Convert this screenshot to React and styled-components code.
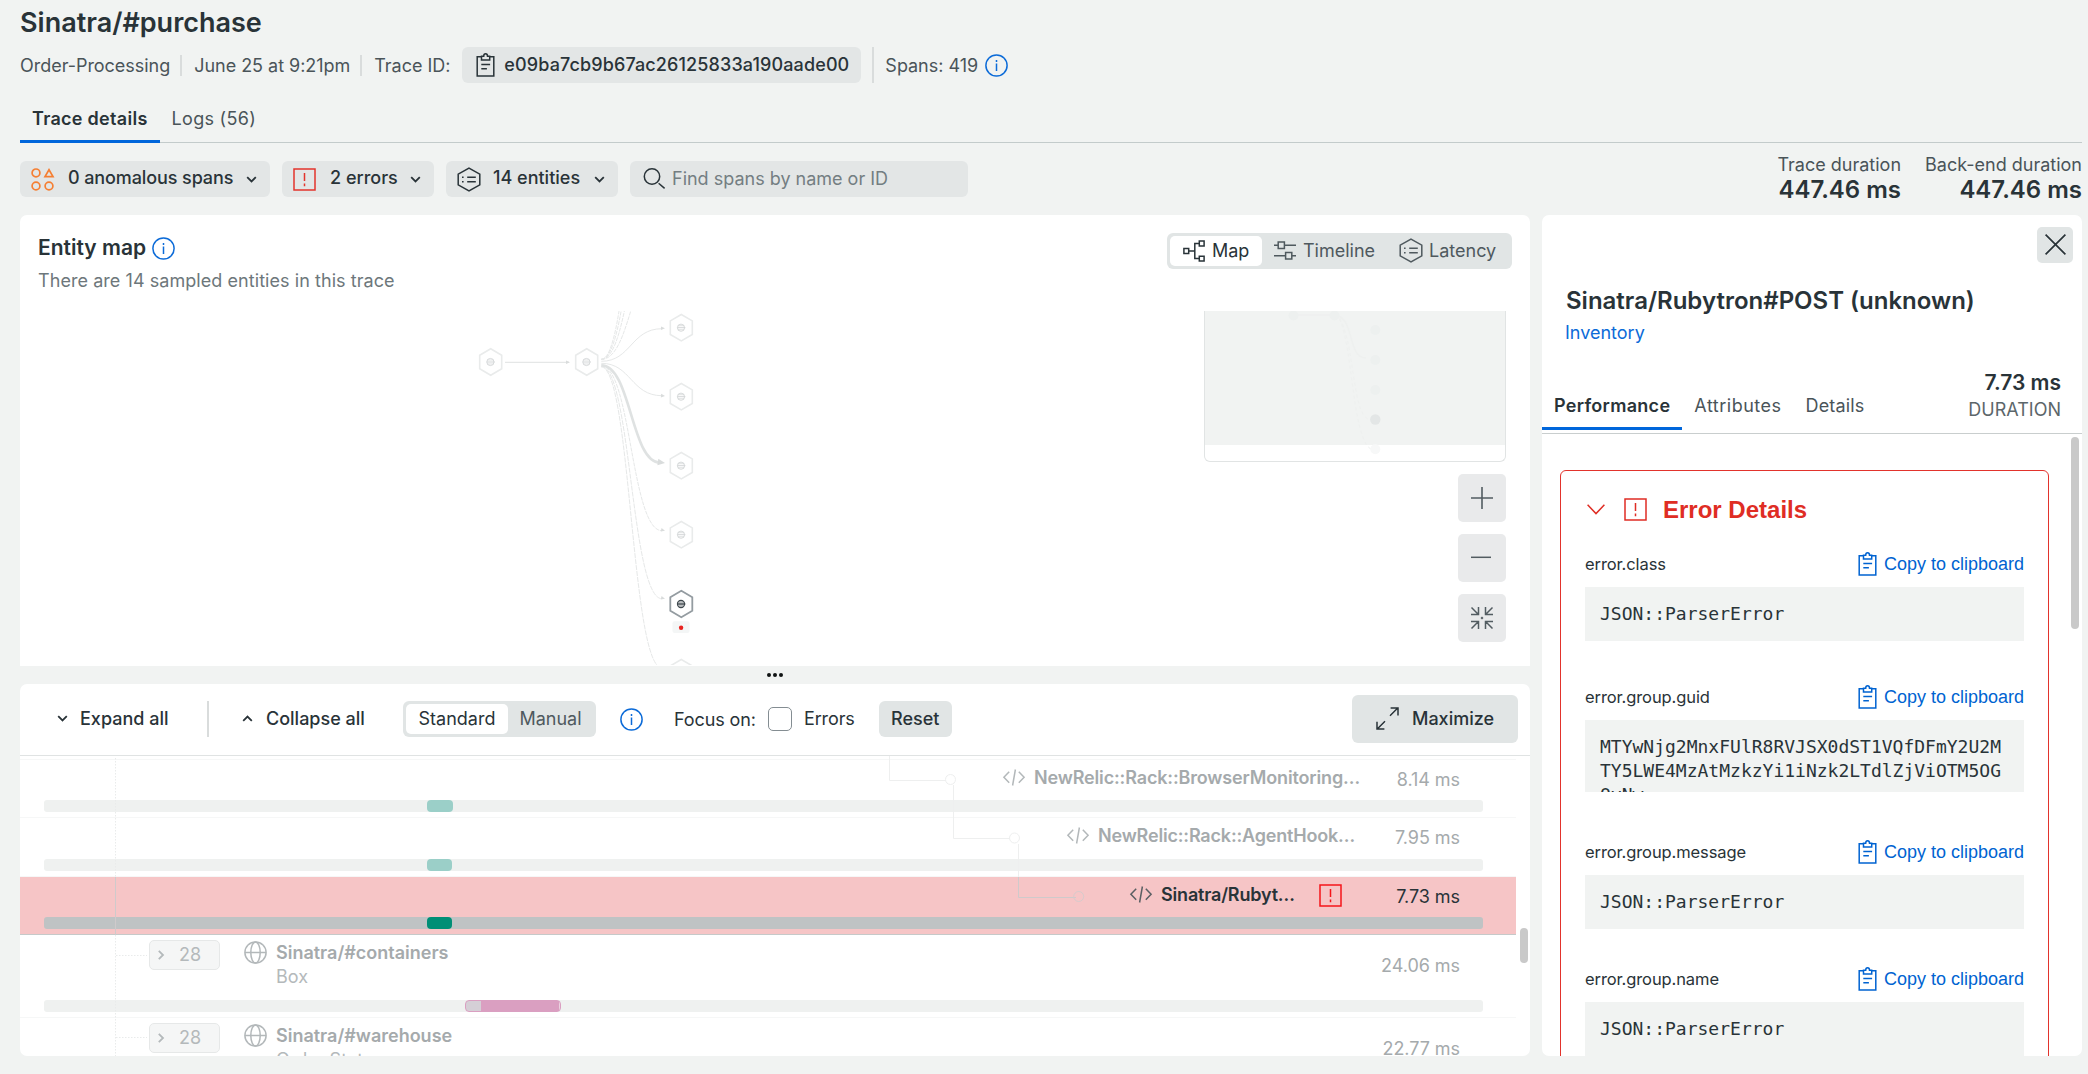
import React from "react";
import styled, { createGlobalStyle, css } from "styled-components";

const Global = createGlobalStyle`
  * { box-sizing: border-box; }
  body {
    margin: 0;
    background: #f1f3f2;
    color: #293338;
    font-family: Inter, "Noto Sans", sans-serif;
    font-size: 18px;
    line-height: 24px;
  }
  svg { display: block; flex: none; overflow: visible; }
`;

const Page = styled.div`
  height: 1074px;
  overflow: hidden;
  padding: 7px 6px 0 20px;
`;

/* ---------- icons ---------- */

const Stroke = styled.svg.attrs({ fill: "none", stroke: "currentColor" })`
  stroke-width: ${(p) => p.$w || 1.5};
`;

const ClipboardIcon = () => (
  <Stroke width="19" height="24" viewBox="0 0 19 24">
    <path d="M5.5 3.8H1.2v19.2h16.6V3.8h-4.3" />
    <path d="M5.5 3.2h2.2c0-3.2 3.8-3.2 3.8 0h2.2v3.9H5.5z" />
    <path d="M5.3 11.5h8.8M5.3 15.8h5.6" />
  </Stroke>
);

const InfoIcon = () => (
  <Stroke width="23" height="23" viewBox="0 0 23 23">
    <circle cx="11.5" cy="11.5" r="10.6" />
    <path d="M11.5 9.4v7.6M11.5 6v1.9" />
  </Stroke>
);

const AnomalyIcon = () => (
  <Stroke width="23" height="23" viewBox="0 0 23 23" $w={1.7}>
    <circle cx="5" cy="4.9" r="3.9" />
    <path d="M18 1.7L22 8.6H14z" />
    <circle cx="5" cy="18" r="3.9" />
    <circle cx="18" cy="18" r="3.9" />
  </Stroke>
);

const ErrorIcon = () => (
  <Stroke width="23" height="23" viewBox="0 0 23 23">
    <path d="M1 1h21v21H1zM11.5 5v8M11.5 15.5v2.7" />
  </Stroke>
);

const EntityIcon = () => (
  <Stroke width="24" height="25" viewBox="0 0 24 25">
    <path d="M12 1.2l10.8 5.9v10.8L12 23.8 1.2 17.9V7.1z" />
    <path d="M10.2 10.3h8.6M10.2 14.7h8.6M5 10.3h1.6M5 14.7h1.6" />
  </Stroke>
);

const SearchIcon = () => (
  <Stroke width="23" height="21" viewBox="0 0 23 21">
    <circle cx="9" cy="8.5" r="7.7" />
    <path d="M15.6 15.2l6 5.2" />
  </Stroke>
);

const MapIcon = () => (
  <Stroke width="22" height="22" viewBox="0 0 22 22">
    <path d="M.9 8.6h4.8v4.8H.9zM16.3 1.1h4.8v4.8h-4.8zM16.3 16.2h4.8V21h-4.8zM5.7 11h6M16.3 3.4h-4.5v15.2h4.5" />
  </Stroke>
);

const TimelineIcon = () => (
  <Stroke width="22" height="19" viewBox="0 0 22 19">
    <path d="M0 4.2h4.2M10.4 4.2H22M4.2 1h6.2v6.4H4.2zM0 14.8h11.6M17.8 14.8H22M11.6 11.6h6.2V18h-6.2z" />
  </Stroke>
);

const PlusIcon = () => (
  <Stroke width="22" height="22" viewBox="0 0 22 22" $w={1.6}>
    <path d="M11 0v22M0 11h22" />
  </Stroke>
);

const MinusIcon = () => (
  <Stroke width="22" height="22" viewBox="0 0 22 22">
    <path d="M0 10.3h20" />
  </Stroke>
);

const CenterIcon = () => (
  <Stroke width="22" height="22" viewBox="0 0 22 22">
    <path d="M.5.5l6.7 6.7M7.5 0v7.5H0M21.5.5l-6.7 6.7M14.5 0v7.5H22M.5 21.5l6.7-6.7M7.5 22v-7.5H0M21.5 21.5l-6.7-6.7M14.5 22v-7.5H22" />
    <path d="M11 9.5l1.5 1.5-1.5 1.5L9.5 11z" fill="currentColor" stroke="none" />
  </Stroke>
);

const ExpandIcon = () => (
  <Stroke width="23" height="23" viewBox="0 0 23 23">
    <path d="M14 8.8L21.5 1.3M14.6 1h7.4v7.4M9 14.2l-7.5 7.5M1 14.8V22h7.4" />
  </Stroke>
);

const CloseIcon = () => (
  <Stroke width="21" height="21" viewBox="0 0 21 21" $w={1.7}>
    <path d="M.6.6l19.8 19.8M20.4.6L.6 20.4" />
  </Stroke>
);

const CodeIcon = () => (
  <Stroke width="22" height="17" viewBox="0 0 22 17">
    <path d="M6.2 2.8L.9 8.3l5.3 5.5M15.8 2.8l5.3 5.5-5.3 5.5M12.4.5L9.6 16.5" />
  </Stroke>
);

const GlobeIcon = () => (
  <Stroke width="23" height="23" viewBox="0 0 23 23">
    <circle cx="11.5" cy="11.5" r="10.6" />
    <ellipse cx="11.5" cy="11.5" rx="4.7" ry="10.6" />
    <path d="M.9 11.5h21.2" />
  </Stroke>
);

const Chevron = ({ dir = "down" }) => (
  <Stroke width="11" height="7" viewBox="0 0 11 7" $w={1.8}>
    {dir === "down" ? <path d="M1.2 1.2l4.3 4.3 4.3-4.3" /> : <path d="M1.2 5.8l4.3-4.3 4.3 4.3" />}
  </Stroke>
);

/* ---------- header ---------- */

const Title = styled.h1`
  margin: 0;
  font-size: 27px;
  font-weight: 600;
  line-height: 32px;
`;

const Meta = styled.div`
  display: flex;
  align-items: center;
  height: 36px;
  margin-top: 8px;
  color: #4a5459;
`;

const MetaText = styled.span`
  padding-top: 1px;
  letter-spacing: -0.03px;
`;

const Divider = styled.i`
  width: 2px;
  height: ${(p) => p.$h || 21}px;
  background: #d9dcdc;
  margin: 0 ${(p) => p.$r ?? 12}px 0 ${(p) => p.$l ?? 11}px;
`;

const TraceId = styled.button`
  display: flex;
  align-items: center;
  gap: 9px;
  height: 36px;
  width: 399px;
  margin-left: 12px;
  padding: 0 0 0 14px;
  border: 0;
  border-radius: 6px;
  background: #e3e6e6;
  color: #293338;
  font: 550 18px/24px Inter, sans-serif;
  letter-spacing: 0.12px;
`;

const Blue = styled.span`
  color: #0c6bd8;
  margin-left: ${(p) => p.$ml || 0}px;
`;

const Tabs = styled.nav`
  display: flex;
  height: 46px;
  margin-top: 14px;
  background: linear-gradient(#c3cbcb, #c3cbcb) 0 45px / 100% 1px no-repeat;
`;

const Tab = styled.span`
  height: 46px;
  line-height: 43px;
  padding: 0 12px;
  letter-spacing: ${(p) => p.$ls || 0.29}px;
  color: #4a5459;
  border-bottom: 3px solid transparent;
  ${(p) =>
    p.$active &&
    css`
      font-weight: 600;
      color: #293338;
      border-color: #0066db;
    `}
`;

const Filters = styled.div`
  display: flex;
  gap: 12px;
  height: 36px;
  margin-top: 18px;
`;

const FilterButton = styled.button`
  display: flex;
  align-items: center;
  width: ${(p) => p.$width}px;
  height: 36px;
  padding: 0 13px 0 11px;
  border: 0;
  border-radius: 6px;
  background: #e3e6e6;
  color: #293338;
  font: 550 18px/24px Inter, sans-serif;
`;

const FilterLabel = styled.span`
  flex: 1;
  text-align: left;
  padding-bottom: 2px;
  margin-left: ${(p) => p.$ml || 14}px;
  letter-spacing: ${(p) => p.$ls || 0}px;
`;

const FilterIcon = styled.span`
  color: ${(p) => p.$color};
`;

const Search = styled.div`
  display: flex;
  align-items: center;
  gap: 6px;
  width: 338px;
  height: 36px;
  padding: 0 13px 1px;
  border-radius: 6px;
  background: #e3e6e6;
  span { color: #747e82; }
`;

const Durations = styled.div`
  display: flex;
  gap: 24px;
  margin: -8px 0 0 auto;
  text-align: right;
  color: #4a5459;
  height: 50px;
  strong {
    display: block;
    color: #293338;
    font-size: 24px;
    line-height: 25px;
    font-weight: 600;
  }
`;

/* ---------- body ---------- */

const Main = styled.main`
  display: grid;
  grid-template-columns: 1510px 540px;
  gap: 12px;
  height: 841px;
  margin-top: 18px;
`;

const Left = styled.div`
  display: flex;
  flex-direction: column;
  min-width: 0;
`;

const MapPanel = styled.section`
  height: 451px;
  background: #fff;
  border-radius: 7px 7px 0 0;
`;

const MapHeader = styled.div`
  display: flex;
  justify-content: space-between;
  height: 96px;
  padding: 18px 18px 0 18px;
`;

const MapTitle = styled.div`
  display: flex;
  align-items: center;
  gap: 6px;
  height: 30px;
  font-size: 21px;
  font-weight: 600;
`;

const Subtitle = styled.div`
  margin-top: 6px;
  color: #6d777b;
  letter-spacing: 0.06px;
`;

const Segmented = styled.div`
  display: flex;
  height: 36px;
  width: ${(p) => p.$width}px;
  padding: 3px;
  border-radius: 6px;
  background: #e1e5e5;
`;

const Segment = styled.span`
  display: flex;
  align-items: center;
  justify-content: ${(p) => (p.$pl ? "flex-start" : "center")};
  gap: ${(p) => p.$gap || 8}px;
  width: ${(p) => p.$width}px;
  padding-left: ${(p) => p.$pl || 0}px;
  padding-bottom: 1px;
  border-radius: 5px;
  color: #4f595e;
  ${(p) => p.$active && "background: #fff; color: #293338;"}
`;

const Canvas = styled.div`
  position: relative;
  height: 354px;
  overflow: hidden;
`;

const Overlay = styled.div`
  position: absolute;
  top: 0;
  right: 24px;
  display: flex;
  flex-direction: column;
  align-items: flex-end;
  gap: 12px;
`;

const MiniMap = styled.div`
  width: 302px;
  height: 151px;
  border: 1px solid #e1e4e4;
  border-top: 0;
  border-radius: 0 0 6px 6px;
  background: linear-gradient(#f1f3f2, #f1f3f2) 0 0 / 100% 134px no-repeat #fff;
`;

const ZoomControls = styled.div`
  display: flex;
  flex-direction: column;
  gap: 12px;
`;

const ZoomButton = styled.button`
  display: flex;
  align-items: center;
  justify-content: center;
  width: 48px;
  height: 48px;
  border: 0;
  border-radius: 5px;
  background: #e9eaeb;
  color: #525c61;
`;

const Splitter = styled.div`
  display: flex;
  align-items: center;
  justify-content: center;
  gap: 2px;
  height: 18px;
  i { width: 4px; height: 4px; border-radius: 2px; background: #101314; }
`;

const SpanPanel = styled.section`
  display: flex;
  flex-direction: column;
  height: 372px;
  overflow: hidden;
  background: #fff;
  border-radius: 7px;
`;

const Toolbar = styled.div`
  display: flex;
  align-items: center;
  flex: none;
  height: 72px;
  padding-bottom: 1px;
  border-bottom: 1px solid #e0e3e3;
`;

const ToolButton = styled.span`
  display: flex;
  align-items: center;
  gap: ${(p) => p.$gap || 12}px;
  width: ${(p) => p.$width}px;
  padding: 0 0 1px ${(p) => p.$pl}px;
  font-weight: 550;
`;

const FocusLabel = styled.span`
  margin-left: ${(p) => p.$ml}px;
  padding-top: ${(p) => p.$pt || 0}px;
  letter-spacing: -0.1px;
`;

const Checkbox = styled.i`
  width: 24px;
  height: 24px;
  margin-left: 12px;
  border: 1.5px solid #848d92;
  border-radius: 5px;
`;

const SolidButton = styled.button`
  display: flex;
  align-items: center;
  justify-content: center;
  gap: 13px;
  width: ${(p) => p.$width}px;
  height: ${(p) => p.$height}px;
  margin-left: ${(p) => p.$ml};
  margin-right: ${(p) => p.$mr || 0}px;
  padding: 0 0 1px;
  border: 0;
  border-radius: 6px;
  background: #e1e5e5;
  color: #293338;
  font: 550 18px/24px Inter, sans-serif;
`;

const List = styled.div`
  position: relative;
  height: 300px;
  overflow: hidden;
`;

const PreviousRow = styled.div`
  width: 1496px;
  height: 4px;
  border-bottom: 1px solid #f6f7f7;
`;

const Row = styled.div`
  display: flex;
  flex-direction: column;
  width: 1496px;
  height: ${(p) => p.$height}px;
  padding: 6px 33px 5px 24px;
  border-bottom: 1px solid ${(p) => (p.$error ? "#c6c9c9" : "#f6f7f7")};
  background: ${(p) => (p.$error ? "#f6c5c6" : "transparent")};
  color: ${(p) => (p.$error ? "#293338" : "#a5aaac")};
`;

const RowContent = styled.div`
  display: flex;
  align-items: flex-start;
  flex: 1;
  min-height: 0;
  padding-right: 23px;
  padding-left: ${(p) => p.$indent}px;
`;

const SpanIcon = styled.span`
  margin-top: ${(p) => p.$top || 0}px;
  margin-right: 9px;
  color: ${(p) => (p.$error ? "#5a5f63" : "#b3b8ba")};
`;

const SpanName = styled.div`
  font-weight: 600;
  line-height: 23px;
  letter-spacing: ${(p) => p.$ls || 0}px;
`;

const SpanEntity = styled.div`
  color: #b4b9bb;
  line-height: 25px;
`;

const RowError = styled.span`
  color: #f5141a;
  margin: 1px 0 0 auto;
`;

const SpanTime = styled.div`
  width: 118px;
  margin-left: ${(p) => (p.$error ? 0 : "auto")};
  text-align: right;
  line-height: ${(p) => p.$line}px;
  letter-spacing: -0.05px;
`;

const Track = styled.div`
  display: flex;
  flex: none;
  height: 12px;
  border-radius: 3px;
  background: ${(p) => (p.$error ? "#bfc3c4" : "#eff1f0")};
`;

const Mark = styled.i`
  width: ${(p) => p.$width}px;
  margin-left: ${(p) => p.$start}px;
  border-radius: 4px;
  background: ${(p) => p.$color};
  ${(p) => p.$partial && "border: 1px solid #da9fc1; background: linear-gradient(90deg, #d5cfd6 15px, #da9fc1 15px, #da9fc1 93px, #ecd3e1 93px);"}
`;

const CountButton = styled.span`
  display: flex;
  align-items: center;
  gap: 15px;
  width: 71px;
  height: 30px;
  margin: -1px 24px 0 0;
  padding-left: 8px;
  border: 1px solid #e6e8e8;
  border-radius: 5px;
  background: #f5f6f6;
  color: #b4b9bb;
`;

const TreeLines = styled.svg`
  position: absolute;
  left: 0;
  top: 0;
`;

const Thumb = styled.i`
  position: absolute;
  right: ${(p) => p.$right}px;
  top: ${(p) => p.$top}px;
  width: 8px;
  height: ${(p) => p.$height}px;
  border-radius: 4px;
  background: #c9c9c9;
`;

/* ---------- side panel ---------- */

const Side = styled.aside`
  display: flex;
  flex-direction: column;
  overflow: hidden;
  background: #fff;
  border-radius: 7px;
`;

const CloseButton = styled.button`
  display: flex;
  align-items: center;
  justify-content: center;
  align-self: flex-end;
  flex: none;
  width: 36px;
  height: 36px;
  margin: 12px 9px 0 0;
  padding: 0 0 1px;
  border: 0;
  border-radius: 5px;
  background: #e1e5e5;
  color: #293338;
`;

const SideTitle = styled.h2`
  margin: 23px 0 0 24px;
  font-size: 24px;
  font-weight: 600;
  line-height: 30px;
`;

const SideLink = styled.a`
  margin: 5px 0 0 23px;
  color: #0c6bd8;
`;

const SideTabs = styled.div`
  display: flex;
  align-items: flex-end;
  flex: none;
  height: 89px;
  border-bottom: 1px solid #c9cece;
  padding-bottom: 3px;
`;

const SideDuration = styled.div`
  margin: 0 21px 7px auto;
  text-align: right;
  line-height: 27px;
  color: #5c666a;
  strong {
    display: block;
    color: #293338;
    font-size: 21px;
    font-weight: 600;
  }
`;

const SideBody = styled.div`
  position: relative;
  flex: 1;
  padding: 36px 33px 0 18px;
  overflow: hidden;
`;

const ErrorCard = styled.div`
  height: 700px;
  padding: 26px 24px 0;
  border: 1.5px solid #e2332c;
  border-radius: 6px;
`;

const CardHeader = styled.div`
  display: flex;
  align-items: center;
  height: 24px;
  margin-bottom: 31px;
  padding-left: 2px;
  color: #df2d24;
  font: 700 24px/24px "Liberation Sans", Arial, sans-serif;
`;

const CardTitle = styled.span`
  margin-left: 16px;
  padding-top: 2px;
`;

const CardGlyph = styled.span`
  margin-left: 19px;
`;

const Field = styled.div`
  margin-bottom: ${(p) => p.$gap}px;
`;

const FieldHeader = styled.div`
  display: flex;
  align-items: center;
  justify-content: space-between;
  height: 24px;
  margin-bottom: 11px;
  font-size: 16.5px;
  letter-spacing: -0.1px;
`;

const CopyLink = styled.a`
  display: flex;
  align-items: center;
  gap: 7px;
  color: #0063d1;
  font: 18px/24px "Liberation Sans", Arial, sans-serif;
  letter-spacing: 0;
`;

const Code = styled.div`
  height: ${(p) => p.$height || 54}px;
  overflow: hidden;
  padding: 15px;
  background: #f1f3f2;
  font: 18px/24px "DejaVu Sans Mono", monospace;
  word-break: break-all;
`;

/* ---------- drawings ---------- */

const hex = (x, y) => `M${x} ${y - 13.2}l11 6.4v13.6l-11 6.4-11-6.4v-13.6z`;

const Node = ({ x, y, active }) => (
  <g fill="none" stroke={active ? "#949ca1" : "#e9ebeb"} strokeWidth={active ? 1.8 : 1.6}>
    <path d={hex(x, y)} fill="#fff" />
    <g stroke={active ? "#3c464b" : "#d3d6d7"}>
      <circle cx={x - 0.3} cy={y} r="3.6" strokeWidth={active ? 1.1 : 0.9} />
      <path d={`M${x - 4} ${y}h8`} strokeWidth={active ? 1.5 : 1} />
      <path d={`M${x - 3.3} ${y - 2}h6M${x - 3.3} ${y + 2}h6`} strokeWidth="0.7" />
    </g>
  </g>
);

const curve = (sy, ty) => `M581.3 ${sy}C611 ${sy} 611 ${ty} 642 ${ty}`;

const Arrow = ({ x, y, r = 0, s = 1 }) => (
  <path transform={`translate(${x} ${y}) rotate(${r}) scale(${s})`} d="M0 0l-4-1.8v3.6z" fill="#d9dcdc" />
);

const NODE_YS = [16.7, 85.7, 154.7, 223.7, 361.7];

const EntityGraph = () => (
  <svg width="1180" height="354" viewBox="0 0 1180 354">
    <g fill="none" stroke="#e6e8e8" strokeWidth="1">
      <path d="M485 51.3H549" stroke="#dfe2e2" />
      <path d={curve(50.3, 17.7)} />
      <path d={curve(52.3, 84.7)} />
      {[-51, -120, -189, -258].map((y) => (
        <path key={y} d={curve(48.3, y)} strokeDasharray="4 1" />
      ))}
      <path d={curve(55, 219.7)} strokeDasharray="4 1" />
      <path d={curve(55.5, 287.7)} strokeDasharray="5 1" />
      <path d={curve(56, 357)} strokeDasharray="5 1" />
      <path d="M581.3 54.3C611 54.3 611 151.7 640 151.7" stroke="#dfe2e2" strokeWidth="2.6" />
    </g>
    <Arrow x={550} y={51.3} />
    <Arrow x={645} y={17.3} />
    <Arrow x={645} y={85} r={5} />
    <Arrow x={645} y={152} r={8} s={1.8} />
    <Arrow x={645} y={219.7} r={15} />
    <Arrow x={645} y={287.7} r={15} />
    <Node x={470.7} y={51} />
    <Node x={566.7} y={51} />
    {NODE_YS.map((y) => (
      <Node key={y} x={661.3} y={y} />
    ))}
    <Node x={661.3} y={293} active />
    <rect x="652.5" y="310.3" width="17" height="11.7" rx="2" fill="#f4f6f6" />
    <circle cx="661.1" cy="316.7" r="2.2" fill="#e8231f" />
  </svg>
);

const MiniGraph = () => (
  <svg width="300" height="150" viewBox="0 0 300 150">
    <g fill="none" stroke="#eef0ef">
      <path d="M93 4h32M130 4C150 6 142 47 161 47" strokeWidth="1.5" />
      <path d="M131 3C150 20 146 105 164 108M131 3C148 20 146 128 166 138" strokeDasharray="3 3" />
    </g>
    <g fill="#edf0ef">
      <circle cx="88.5" cy="4.5" r="5" />
      <circle cx="129.5" cy="4.5" r="5" />
      {[19, 49, 79].map((y) => (
        <circle key={y} cx="170.3" cy={y} r="5" />
      ))}
      <circle cx="170.3" cy="138.3" r="5" fill="#f7f8f8" />
    </g>
    <circle cx="170.3" cy="108.5" r="5.2" fill="#e3e6e6" />
  </svg>
);

const Connectors = () => (
  <TreeLines width="1496" height="300" viewBox="0 0 1496 300" fill="none" stroke="#eeefef">
    <path d="M95.5 2V300M96 199.5h31M96 281.5h31" stroke="#e9ebeb" strokeDasharray="1.5 1.5" />
    <path d="M869.5 0V24.5H926M933.5 29V82.5H990M998.5 88V121" />
    <circle cx="930.5" cy="23.5" r="5" fill="#fff" />
    <circle cx="994.5" cy="82" r="5" fill="#fff" />
    <path d="M95.5 121v58M998.5 121V141.500H1056" stroke="#cfcacb" />
    <circle cx="1058.7" cy="140.5" r="5" stroke="#d6cbcc" />
  </TreeLines>
);

/* ---------- data ---------- */

const spans = [
  { name: "NewRelic::Rack::BrowserMonitoring…", time: "8.14 ms", height: 58, indent: 959, start: 383, width: 26, ls: -0.15 },
  { name: "NewRelic::Rack::AgentHook…", time: "7.95 ms", height: 59, indent: 1023, start: 383, width: 25, ls: -0.18 },
  { name: "Sinatra/Rubyt…", time: "7.73 ms", height: 58, indent: 1086, start: 383, width: 25, error: true, ls: -0.18 },
  { name: "Sinatra/#containers", entity: "Box", time: "24.06 ms", height: 83, indent: 105, start: 421, width: 96, count: 28 },
  { name: "Sinatra/#warehouse", entity: "Order Status", time: "22.77 ms", height: 83, indent: 105, start: 421, width: 96, count: 28 },
];

const fields = [
  { label: "error.class", value: "JSON::ParserError", gap: 44 },
  { label: "error.group.guid", value: "MTYwNjg2MnxFUlR8RVJSX0dST1VQfDFmY2U2MTY5LWE4MzAtMzkzYi1iNzk2LTdlZjViOTM5OGQyNw", gap: 48, height: 72 },
  { label: "error.group.message", value: "JSON::ParserError", gap: 38 },
  { label: "error.group.name", value: "JSON::ParserError", gap: 39 },
];

const SpanRow = ({ span }) => (
  <Row $height={span.height} $error={span.error}>
    <RowContent $indent={span.indent}>
      {span.count && (
        <CountButton>
          <svg width="6" height="10" viewBox="0 0 6 10" fill="none" stroke="currentColor" strokeWidth="1.8">
            <path d="M.8.8L5 5 .8 9.2" />
          </svg>
          {span.count}
        </CountButton>
      )}
      <SpanIcon $error={span.error} $top={span.count ? 0 : 3}>
        {span.count ? <GlobeIcon /> : <CodeIcon />}
      </SpanIcon>
      <div>
        <SpanName $ls={span.ls}>{span.name}</SpanName>
        {span.entity && <SpanEntity>{span.entity}</SpanEntity>}
      </div>
      {span.error && (
        <RowError>
          <ErrorIcon />
        </RowError>
      )}
      <SpanTime $error={span.error} $line={span.count ? 49 : 27}>{span.time}</SpanTime>
    </RowContent>
    <Track $error={span.error}>
      <Mark $start={span.start} $width={span.width} $partial={!!span.count} $color={span.error ? "#008f76" : "#9bcfc8"} />
    </Track>
  </Row>
);

export default function App() {
  return (
    <Page>
      <Global />
      <Title>Sinatra/#purchase</Title>
      <Meta>
        <MetaText>Order-Processing</MetaText>
        <Divider $l={10} />
        <MetaText>June 25 at 9:21pm</MetaText>
        <Divider $l={10} />
        <MetaText>Trace ID:</MetaText>
        <TraceId>
          <ClipboardIcon />
          e09ba7cb9b67ac26125833a190aade00
        </TraceId>
        <Divider $h={36} $l={11} $r={11} />
        <MetaText>Spans: 419</MetaText>
        <Blue $ml={7}>
          <InfoIcon />
        </Blue>
      </Meta>
      <Tabs>
        <Tab $active>Trace details</Tab>
        <Tab>Logs (56)</Tab>
      </Tabs>
      <Filters>
        <FilterButton $width={250}>
          <FilterIcon $color="#f57f33">
            <AnomalyIcon />
          </FilterIcon>
          <FilterLabel $ls={-0.1}>0 anomalous spans</FilterLabel>
          <Chevron />
        </FilterButton>
        <FilterButton $width={152}>
          <FilterIcon $color="#e3342c">
            <ErrorIcon />
          </FilterIcon>
          <FilterLabel>2 errors</FilterLabel>
          <Chevron />
        </FilterButton>
        <FilterButton $width={172}>
          <EntityIcon />
          <FilterLabel $ml={12}>14 entities</FilterLabel>
          <Chevron />
        </FilterButton>
        <Search>
          <SearchIcon />
          <span>Find spans by name or ID</span>
        </Search>
        <Durations>
          <div>
            Trace duration
            <strong>447.46 ms</strong>
          </div>
          <div>
            Back-end duration
            <strong>447.46 ms</strong>
          </div>
        </Durations>
      </Filters>
      <Main>
        <Left>
          <MapPanel>
            <MapHeader>
              <div>
                <MapTitle>
                  Entity map
                  <Blue>
                    <InfoIcon />
                  </Blue>
                </MapTitle>
                <Subtitle>There are 14 sampled entities in this trace</Subtitle>
              </div>
              <Segmented $width={345}>
                <Segment $active $width={92} $pl={13} $gap={7}>
                  <MapIcon />
                  Map
                </Segment>
                <Segment $width={124} $pl={12} $gap={7}>
                  <TimelineIcon />
                  Timeline
                </Segment>
                <Segment $pl={13} $gap={6}>
                  <EntityIcon />
                  Latency
                </Segment>
              </Segmented>
            </MapHeader>
            <Canvas>
              <EntityGraph />
              <Overlay>
                <MiniMap>
                  <MiniGraph />
                </MiniMap>
                <ZoomControls>
                  <ZoomButton>
                    <PlusIcon />
                  </ZoomButton>
                  <ZoomButton>
                    <MinusIcon />
                  </ZoomButton>
                  <ZoomButton>
                    <CenterIcon />
                  </ZoomButton>
                </ZoomControls>
              </Overlay>
            </Canvas>
          </MapPanel>
          <Splitter>
            <i />
            <i />
            <i />
          </Splitter>
          <SpanPanel>
            <Toolbar>
              <ToolButton $width={187} $pl={37}>
                <Chevron />
                Expand all
              </ToolButton>
              <Divider $h={36} $l={0} $r={0} />
              <ToolButton $width={194} $pl={33} $gap={13}>
                <Chevron dir="up" />
                Collapse all
              </ToolButton>
              <Segmented $width={193}>
                <Segment $active $width={102}>Standard</Segment>
                <Segment $width={85}>Manual</Segment>
              </Segmented>
              <Blue $ml={24}>
                <InfoIcon />
              </Blue>
              <FocusLabel $ml={31} $pt={1}>Focus on:</FocusLabel>
              <Checkbox />
              <FocusLabel $ml={12}>Errors</FocusLabel>
              <SolidButton $width={73} $height={36} $ml="24px">Reset</SolidButton>
              <SolidButton $width={166} $height={48} $ml="auto" $mr={12}>
                <ExpandIcon />
                Maximize
              </SolidButton>
            </Toolbar>
            <List>
              <PreviousRow />
              {spans.map((span) => (
                <SpanRow key={span.name} span={span} />
              ))}
              <Connectors />
              <Thumb $right={2} $top={172} $height={35} />
            </List>
          </SpanPanel>
        </Left>
        <Side>
          <CloseButton>
            <CloseIcon />
          </CloseButton>
          <SideTitle>Sinatra/Rubytron#POST (unknown)</SideTitle>
          <SideLink>Inventory</SideLink>
          <SideTabs>
            <Tab $active>Performance</Tab>
            <Tab $ls={0.5}>Attributes</Tab>
            <Tab $ls={0.15}>Details</Tab>
            <SideDuration>
              <strong>7.73 ms</strong>
              DURATION
            </SideDuration>
          </SideTabs>
          <SideBody>
            <ErrorCard>
              <CardHeader>
                <svg width="18" height="11" viewBox="0 0 18 11" fill="none" stroke="currentColor" strokeWidth="1.5">
                  <path d="M.6.8L9 9.6 17.4.8" />
                </svg>
                <CardGlyph>
                  <ErrorIcon />
                </CardGlyph>
                <CardTitle>Error Details</CardTitle>
              </CardHeader>
              {fields.map((f) => (
                <Field key={f.label} $gap={f.gap}>
                  <FieldHeader>
                    <span>{f.label}</span>
                    <CopyLink>
                      <ClipboardIcon />
                      Copy to clipboard
                    </CopyLink>
                  </FieldHeader>
                  <Code $height={f.height}>{f.value}</Code>
                </Field>
              ))}
            </ErrorCard>
            <Thumb $right={3} $top={3} $height={192} />
          </SideBody>
        </Side>
      </Main>
    </Page>
  );
}
